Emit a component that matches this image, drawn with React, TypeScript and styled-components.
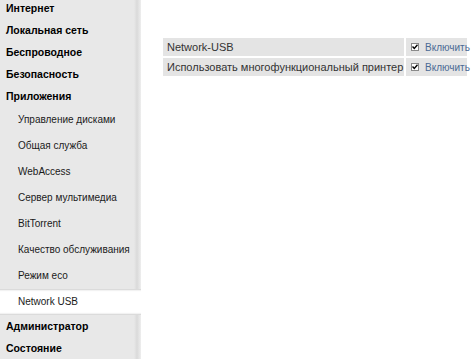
import React from 'react';
import styled, {createGlobalStyle} from 'styled-components';

const GlobalStyle = createGlobalStyle`
  html, body {
    margin: 0;
    padding: 0;
    background: #ffffff;
    font-family: "Liberation Sans", Arial, sans-serif;
  }
`

const Page = styled.div`
  display: flex;
  width: 475px;
  height: 359px;
  overflow: hidden;
`

const Sidebar = styled.nav`
  width: 141px;
  flex-shrink: 0;
  height: 100%;
  background: linear-gradient(to right, #e8e8e8 0, #e8e8e8 134px, #dadada 137px, #eeeeee 141px);
  overflow: hidden;
`

const MenuList = styled.ul`
  list-style: none;
  margin: -3px 0 0 0;
  padding: 0;
`

const TopItem = styled.li`
  height: 22px;
  line-height: 22px;
  padding-left: 6px;
  font-size: 10.5px;
  font-weight: bold;
  color: #000;
  white-space: nowrap;
`

const SubItem = styled.li<{ $active?: boolean }>`
  height: 26px;
  line-height: 26px;
  padding-left: 18px;
  font-size: 10px;
  color: #1a1a1a;
  white-space: nowrap;
  background: ${p => p.$active ? '#ffffff' : 'transparent'};
  box-shadow: ${p => p.$active ? 'inset 0 3px 2px -2px #cfcfcf, inset 0 -3px 2px -2px #cfcfcf' : 'none'};
`

const Content = styled.main`
  flex: 1;
  padding: 38px 8px 0 22px;
`

const SettingsTable = styled.table`
  border-collapse: separate;
  border-spacing: 0 2px;
  margin-top: -2px;
  width: 304px;
  table-layout: fixed;
  font-size: 11px;
`

const LabelCell = styled.td`
  background: #e4e4e4;
  color: #333333;
  height: 18px;
  padding: 0 0 0 4px;
  white-space: nowrap;
  border-right: 2px solid #ffffff;
`

const ValueCell = styled.td`
  background: #e4e4e4;
  height: 18px;
  padding: 0 0 0 5px;
  white-space: nowrap;
`

const CheckLabel = styled.label`
  display: flex;
  align-items: center;
  gap: 6px;
  color: #4b6a94;
  font-size: 10px;
`

const Box = styled.span`
  display: inline-flex;
  width: 8px;
  height: 8px;
  background: #fff;
  border: 1px solid #8a8a8a;
  box-sizing: border-box;
  align-items: center;
  justify-content: center;
`

const Check = () => (
    <Box>
        <svg width="6" height="6" viewBox="0 0 6 6">
            <path d="M0.5 2.5 L2.3 4.5 L5.5 0.8" stroke="#000" strokeWidth="1.4" fill="none"/>
        </svg>
    </Box>
)

const rows = ['Network-USB', 'Использовать многофункциональный принтер']

const App = () => {
    return (<>
        <GlobalStyle/>
        <Page>
            <Sidebar>
                <MenuList>
                    <TopItem>Интернет</TopItem>
                    <TopItem>Локальная сеть</TopItem>
                    <TopItem>Беспроводное</TopItem>
                    <TopItem>Безопасность</TopItem>
                    <TopItem>Приложения</TopItem>
                    <SubItem>Управление дисками</SubItem>
                    <SubItem>Общая служба</SubItem>
                    <SubItem>WebAccess</SubItem>
                    <SubItem>Сервер мультимедиа</SubItem>
                    <SubItem>BitTorrent</SubItem>
                    <SubItem>Качество обслуживания</SubItem>
                    <SubItem>Режим eco</SubItem>
                    <SubItem $active>Network USB</SubItem>
                    <TopItem>Администратор</TopItem>
                    <TopItem>Состояние</TopItem>
                </MenuList>
            </Sidebar>
            <Content>
                <SettingsTable>
                    <colgroup>
                        <col style={{width: 243}}/>
                        <col/>
                    </colgroup>
                    <tbody>
                    {rows.map(r => (
                        <tr key={r}>
                            <LabelCell>{r}</LabelCell>
                            <ValueCell>
                                <CheckLabel><Check/>Включить</CheckLabel>
                            </ValueCell>
                        </tr>
                    ))}
                    </tbody>
                </SettingsTable>
            </Content>
        </Page>
    </>);
}

export default App;
